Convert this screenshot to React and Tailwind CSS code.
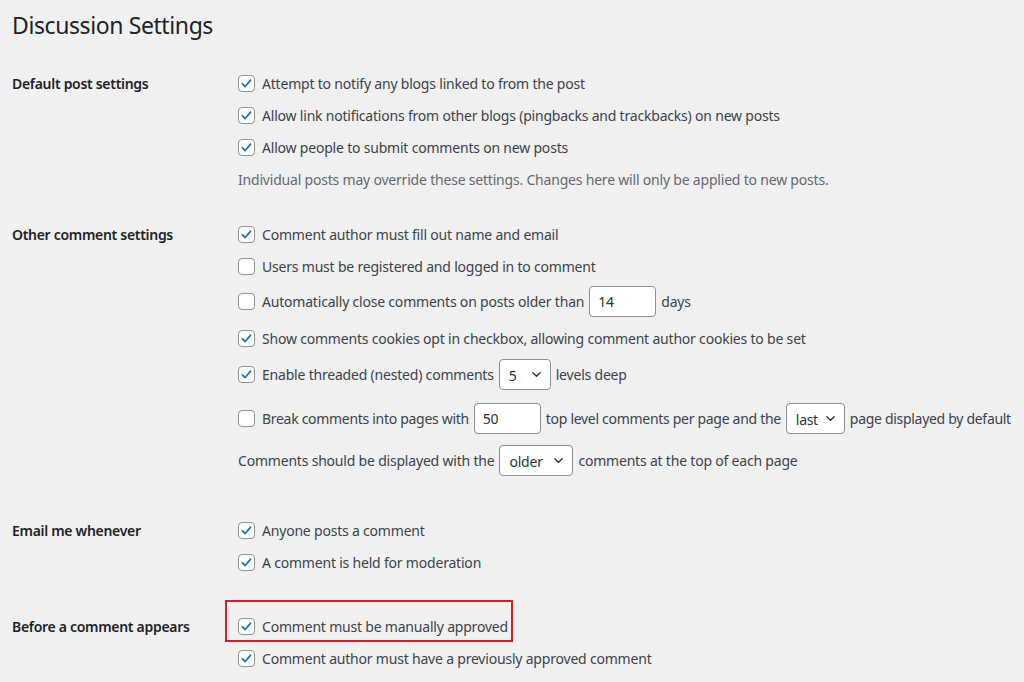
function Check({ on }) {
  return (
    <span className="flex h-[17px] w-[17px] shrink-0 items-center justify-center rounded-[4px] border border-[#8c8f94] bg-white">
      {on && (
        <svg viewBox="0 0 20 20" className="h-[15px] w-[15px]">
          <path d="M4.5 10.5 L8.2 14 L15.5 5.5" fill="none" stroke="#2271b1" strokeWidth="2.4" strokeLinecap="round" strokeLinejoin="round" />
        </svg>
      )}
    </span>
  );
}

function Input({ value, w }) {
  return (
    <span className={`mx-[5px] flex h-[31px] items-center rounded-[4px] border border-[#8c8f94] bg-white px-[8px] text-[#2c3338] ${w}`}>
      {value}
    </span>
  );
}

function Select({ value, w }) {
  return (
    <span className={`mx-[5px] flex h-[31px] items-center justify-between rounded-[4px] border border-[#8c8f94] bg-white pl-[9px] pr-[8px] text-[#2c3338] ${w}`}>
      <span className="pt-[3px]">{value}</span>
      <svg viewBox="0 0 12 12" className="h-[11px] w-[11px]">
        <path d="M2 4 L6 8 L10 4" fill="none" stroke="#2c3338" strokeWidth="1.5" strokeLinecap="round" strokeLinejoin="round" />
      </svg>
    </span>
  );
}

function Row({ h, on, children, extra = "" }) {
  return (
    <div className={`flex items-center whitespace-nowrap ${h} ${extra}`}>
      {on !== undefined && <Check on={on} />}
      <div className="ml-[7px] flex items-center">{children}</div>
    </div>
  );
}

function Section({ label, lh, children, top }) {
  return (
    <div className={`flex ${top}`}>
      <div className={`flex w-[226px] shrink-0 items-center font-semibold tracking-[-0.3px] text-[#1d2327] ${lh}`}>{label}</div>
      <div className="flex flex-col">{children}</div>
    </div>
  );
}

export default function App() {
  return (
    <div className="h-[682px] w-[1024px] overflow-hidden bg-[#f0f0f1] pl-[12px] text-[14px] tracking-[-0.2px] text-[#3c434a]" style={{ fontFamily: '"Noto Sans", sans-serif' }}>
      <h1 className="pt-[9px] text-[23px] leading-[32px] tracking-[-0.4px] text-[#1d2327]">Discussion Settings</h1>

      <Section label="Default post settings" lh="h-[32px]" top="mt-[26px]">
        <Row h="h-[32px]" on>Attempt to notify any blogs linked to from the post</Row>
        <Row h="h-[32px]" on>Allow link notifications from other blogs (pingbacks and trackbacks) on new posts</Row>
        <Row h="h-[32px]" on>Allow people to submit comments on new posts</Row>
        <div className="flex h-[32px] items-center whitespace-nowrap text-[#646970]">Individual posts may override these settings. Changes here will only be applied to new posts.</div>
      </Section>

      <Section label="Other comment settings" lh="h-[32px]" top="mt-[23px]">
        <Row h="h-[32px]" on>Comment author must fill out name and email</Row>
        <Row h="h-[32px]" on={false}>Users must be registered and logged in to comment</Row>
        <Row h="h-[38px]" on={false}>
          Automatically close comments on posts older than <Input value="14" w="w-[67px]" /> days
        </Row>
        <Row h="h-[36px]" on>Show comments cookies opt in checkbox, allowing comment author cookies to be set</Row>
        <Row h="h-[36px]" on>
          Enable threaded (nested) comments <Select value="5" w="w-[52px]" /> levels deep
        </Row>
        <Row h="h-[52px]" on={false} extra="tracking-[-0.3px]">
          Break comments into pages with <Input value="50" w="w-[67px]" /> top level comments per page and the <Select value="last" w="w-[59px]" /> page displayed by default
        </Row>
        <div className="flex h-[32px] items-center whitespace-nowrap">
          Comments should be displayed with the <Select value="older" w="w-[74px]" /> comments at the top of each page
        </div>
      </Section>

      <Section label="Email me whenever" lh="h-[32px]" top="mt-[38px]">
        <Row h="h-[32px]" on>Anyone posts a comment</Row>
        <Row h="h-[32px]" on>A comment is held for moderation</Row>
      </Section>

      <Section label="Before a comment appears" lh="h-[32px]" top="mt-[32px]">
        <div className="relative">
          <div className="pointer-events-none absolute left-[-13px] top-[-10px] h-[42px] w-[288px] border-2 border-[#e8141e]" />
          <Row h="h-[32px]" on>Comment must be manually approved</Row>
        </div>
        <Row h="h-[32px]" on>Comment author must have a previously approved comment</Row>
      </Section>
    </div>
  );
}
